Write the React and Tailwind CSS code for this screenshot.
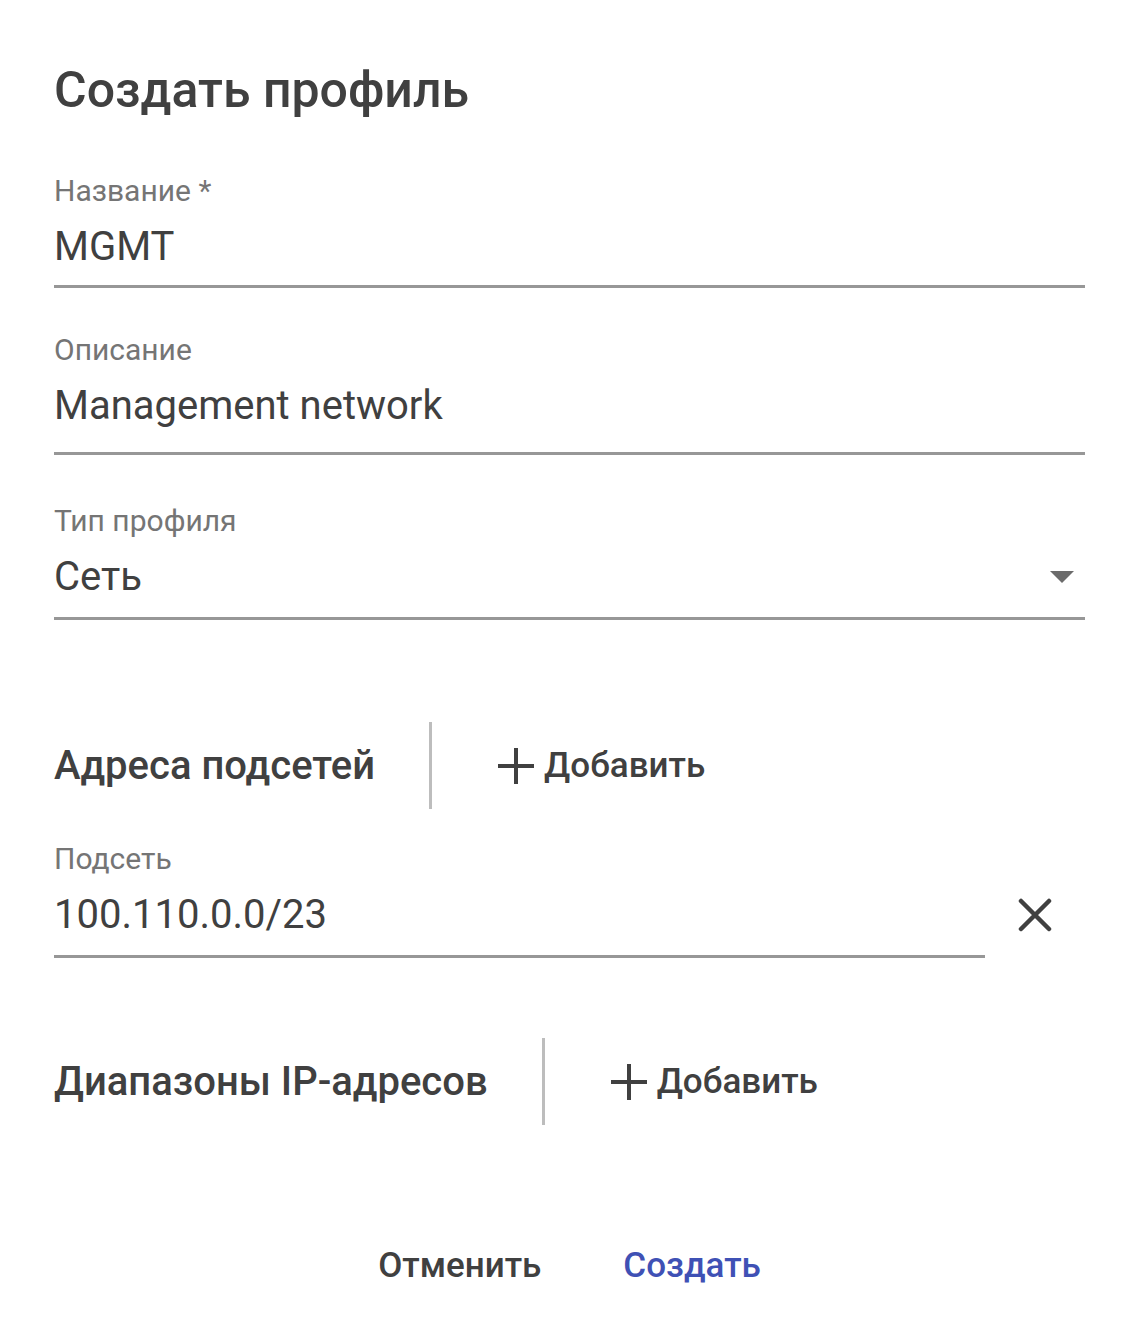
const font = { fontFamily: "Roboto, 'Noto Sans', sans-serif" };

function Field({ label, value, className = "", pb = "pb-[16px]", right = null }) {
  return (
    <div className={className}>
      <div className="text-[30px] leading-[32px] text-[#757575]">{label}</div>
      <div className={"mt-[16px] flex items-center border-b-[3px] border-[#979797] " + pb}>
        <div className="flex-1 text-[40px] leading-[48px] text-[#404040]">{value}</div>
        {right}
      </div>
    </div>
  );
}

function PlusIcon() {
  return (
    <svg width="36" height="36" viewBox="0 0 36 36" className="shrink-0">
      <path d="M16 0h4v16h16v4H20v16h-4V20H0v-4h16z" fill="#404040" />
    </svg>
  );
}

function Section({ title, className = "" }) {
  return (
    <div className={"flex items-center " + className}>
      <h2 className="text-[40px] leading-[44px] font-medium text-[#404040]">{title}</h2>
      <div className="ml-[54px] h-[87px] w-[3px] bg-[#bdbdbd]" />
      <button className="ml-[66px] flex items-center gap-[10px] text-[35px] leading-[44px] font-medium text-[#404040]">
        <PlusIcon />
        <span>Добавить</span>
      </button>
    </div>
  );
}

export default function App() {
  return (
    <div className="min-h-[1336px] w-full bg-white pl-[54px] pr-[50px] pt-[62px]" style={font}>
      <h1 className="text-[50px] leading-[56px] font-medium text-[#404040]">Создать профиль</h1>

      <Field className="mt-[57px]" pb="pb-[14px]" label="Название *" value="MGMT" />
      <Field className="mt-[46px]" pb="pb-[22px]" label="Описание" value="Management network" />
      <Field
        className="mt-[50px]"
        label="Тип профиля"
        value="Сеть"
        right={
          <svg width="24" height="12" viewBox="0 0 24 12" className="mr-[11px]">
            <path d="M0 0h24L12 12z" fill="#6b6b6b" />
          </svg>
        }
      />

      <Section className="mt-[102px]" title="Адреса подсетей" />

      <div className="mt-[34px] flex items-start">
        <Field className="flex-1" label="Подсеть" value="100.110.0.0/23" />
        <button className="mt-[48px] flex h-[48px] w-[100px] items-center justify-center">
          <svg width="34" height="34" viewBox="0 0 34 34">
            <path d="M3 3L31 31M31 3L3 31" stroke="#404040" strokeWidth="4.5" strokeLinecap="round" />
          </svg>
        </button>
      </div>

      <Section className="mt-[80px]" title="Диапазоны IP-адресов" />

      <div className="mt-[121px] flex justify-center gap-[82px] text-[35px] leading-[40px] font-medium">
        <button className="text-[#404040]">Отменить</button>
        <button className="text-[#3f51b5]">Создать</button>
      </div>
    </div>
  );
}
